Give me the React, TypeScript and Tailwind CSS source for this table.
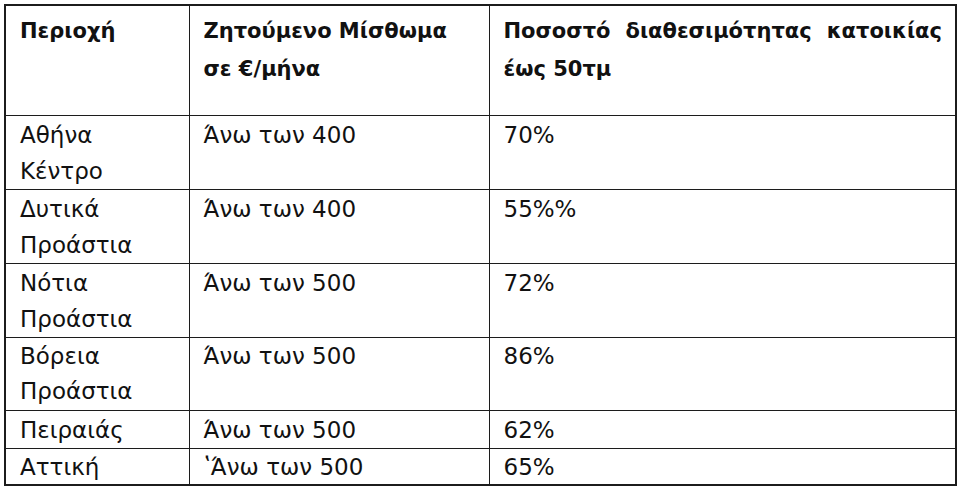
import React from 'react';

type Row = {
  area: string[];
  rent: string;
  share: string;
  lh: string;
};

const rows: Row[] = [
  { area: ['Αθήνα', 'Κέντρο'], rent: 'Άνω των 400', share: '70%', lh: 'leading-[36px]' },
  { area: ['Δυτικά', 'Προάστια'], rent: 'Άνω των 400', share: '55%%', lh: 'leading-[36px]' },
  { area: ['Νότια', 'Προάστια'], rent: 'Άνω των 500', share: '72%', lh: 'leading-[36px]' },
  { area: ['Βόρεια', 'Προάστια'], rent: 'Άνω των 500', share: '86%', lh: 'leading-[35.5px]' },
  { area: ['Πειραιάς'], rent: 'Άνω των 500', share: '62%', lh: 'leading-[36px]' },
  { area: ['Αττική'], rent: '\u02BDΆνω των 500', share: '65%', lh: 'leading-[34px]' },
];

const cell = 'border border-[#1c1c1c] align-top pl-[14px] pr-[13px] pb-0';
const head = `${cell} pt-[6px] font-bold`;
const body = `${cell} pt-[1px]`;

export default function App() {
  return (
    <div className="w-[960px] h-[490px] bg-white p-1 text-[#111] font-['DejaVu_Sans',sans-serif] text-[23px]">
      <table className="table-fixed border-collapse border-2 border-[#1c1c1c] w-[953px]">
        <colgroup>
          <col className="w-[184px]" />
          <col className="w-[300px]" />
          <col />
        </colgroup>
        <thead>
          <tr className="h-[110px] text-[21px] leading-[38px]">
            <th className={`${head} text-left`}>Περιοχή</th>
            <th className={`${head} text-left`}>
              Ζητούμενο Μίσθωμα
              <br />
              σε €/μήνα
            </th>
            <th className={`${head} text-justify`}>
              Ποσοστό διαθεσιμότητας κατοικίας έως 50τμ
            </th>
          </tr>
        </thead>
        <tbody>
          {rows.map((r) => (
            <tr key={r.area.join(' ')} className={r.lh}>
              <td className={body}>
                {r.area.map((a) => (
                  <div key={a}>{a}</div>
                ))}
              </td>
              <td className={body}>{r.rent}</td>
              <td className={body}>{r.share}</td>
            </tr>
          ))}
        </tbody>
      </table>
    </div>
  );
}
